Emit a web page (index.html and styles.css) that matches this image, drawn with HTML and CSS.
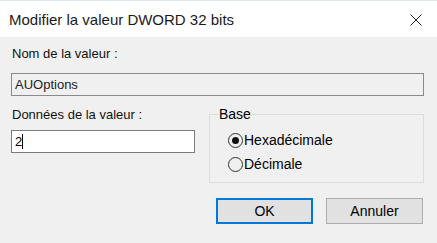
FILE: index.html
```html
<!DOCTYPE html>
<html lang="fr">
<head>
<meta charset="utf-8">
<title>Modifier la valeur DWORD 32 bits</title>
<link rel="stylesheet" href="styles.css">
</head>
<body>
  <div class="dialog">
    <div class="titlebar">
      <span class="title">Modifier la valeur DWORD 32 bits</span>
      <svg class="close" width="12" height="12" viewBox="0 0 12 12">
        <path d="M0.5 0.5 L11.5 11.5 M11.5 0.5 L0.5 11.5" stroke="#222" stroke-width="1" fill="none"/>
      </svg>
    </div>
    <div class="content">
      <div class="label name-label">Nom de la valeur :</div>
      <div class="field readonly">AUOptions</div>

      <div class="row">
        <div class="col">
          <div class="label data-label">Données de la valeur :</div>
          <div class="field edit">2<span class="caret"></span></div>
        </div>
        <fieldset class="group">
          <legend>Base</legend>
          <div class="radio"><span class="dot checked"></span>Hexadécimale</div>
          <div class="radio"><span class="dot"></span>Décimale</div>
        </fieldset>
      </div>

      <div class="buttons">
        <button class="btn default">OK</button>
        <button class="btn">Annuler</button>
      </div>
    </div>
  </div>
</body>
</html>
```

FILE: styles.css
```css
html, body { margin: 0; padding: 0; }

body
{
  width: 437px;
  height: 243px;
  background: #f0f0f0;
  font-family: "Liberation Sans", Arial, sans-serif;
  font-size: 13px;
  color: #000;
  overflow: hidden;
}

.titlebar
{
  height: 37px;
  background: #fff;
  border-top: 1px solid #d8e9f4;
  display: flex;
  align-items: center;
  padding: 0 15px 0 9px;
  box-sizing: border-box;
}

.title
{
  font-size: 15px;
  color: #1a1a1a;
  flex: 1;
  margin-top: 1px;
}

.close { margin-top: 2px; }

.content
{
  padding: 0 13px 0 11px;
}

.label { line-height: 16px; color: #111; padding-left: 1px; }

.name-label { margin-top: 9px; }

.field
{
  height: 23px;
  box-sizing: border-box;
  border: 1px solid #7a7a7a;
  line-height: 21px;
  padding-left: 3px;
  font-size: 13px;
}

.readonly
{
  margin-top: 11px;
  background: #f0f0f0;
  border-color: #8a8a8a;
  color: #222;
}

.row
{
  display: flex;
  align-items: flex-start;
  margin-top: 11px;
  gap: 14px;
}

.col { width: 184px; }

.edit
{
  margin-top: 7px;
  background: #fff;
  border-color: #7a7a7a;
}

.caret
{
  display: inline-block;
  width: 1px;
  height: 15px;
  background: #000;
  vertical-align: -3px;
}

.group
{
  margin: 0;
  padding: 7px 0 0 19px;
  width: 215px;
  height: 76px;
  box-sizing: border-box;
  border: 1px solid #dcdcdc;
  font-size: 14px;
}

.group legend
{
  padding: 0 1px;
  margin-left: -11px;
  line-height: 14px;
}

.radio
{
  display: flex;
  align-items: center;
  height: 24px;
  margin-left: -1px;
}

.dot
{
  width: 15px;
  height: 15px;
  box-sizing: border-box;
  border: 1px solid #333;
  border-radius: 50%;
  margin-right: 1px;
  position: relative;
}

.dot.checked::after
{
  content: "";
  position: absolute;
  left: 3px;
  top: 3px;
  width: 7px;
  height: 7px;
  border-radius: 50%;
  background: #111;
}

.buttons
{
  display: flex;
  justify-content: flex-end;
  gap: 13px;
  margin-top: 15px;
  padding-right: 1px;
}

.btn
{
  width: 97px;
  height: 26px;
  box-sizing: border-box;
  border: 1px solid #adadad;
  background: #e1e1e1;
  font-family: "Liberation Sans", Arial, sans-serif;
  font-size: 14px;
  color: #000;
  padding: 0;
}

.btn.default
{
  border: 2px solid #0078d7;
}
```
